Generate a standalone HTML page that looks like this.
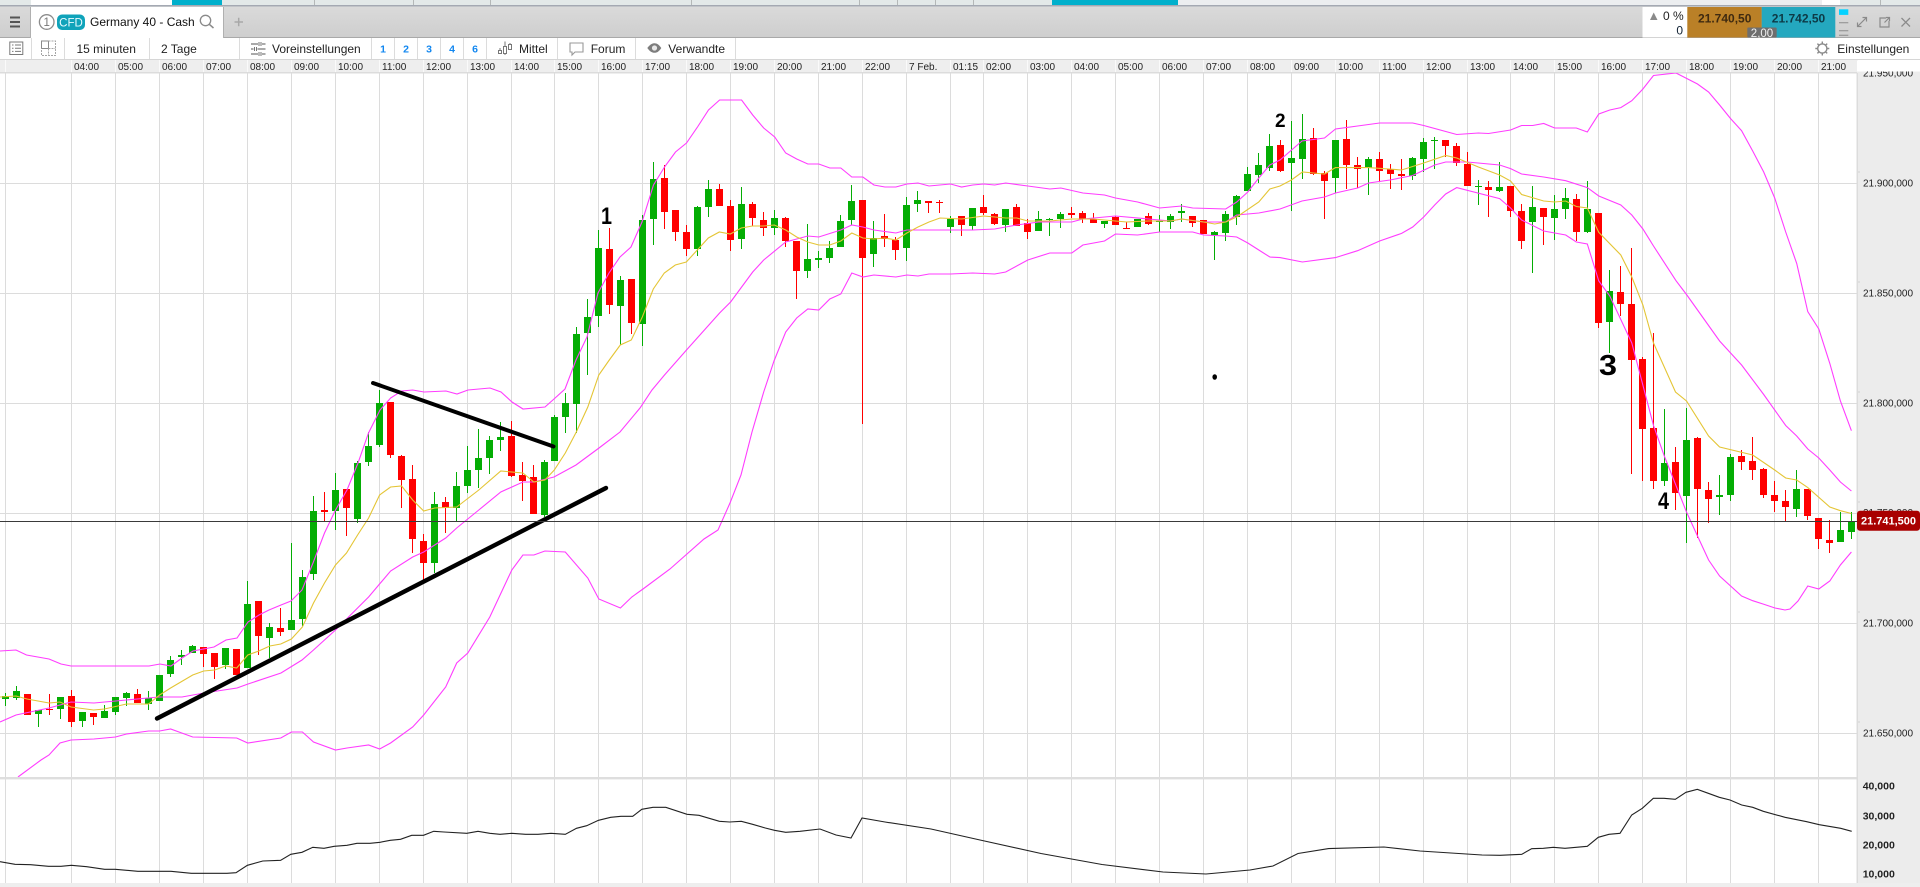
<!DOCTYPE html>
<html><head><meta charset="utf-8"><title>Germany 40 - Cash</title>
<style>
html,body{margin:0;padding:0;background:#fff;overflow:hidden;width:1920px;height:887px}
svg{display:block}
text{font-family:"Liberation Sans",sans-serif}
</style></head><body>
<svg xmlns="http://www.w3.org/2000/svg" width="1920" height="887" viewBox="0 0 1920 887">
<defs>
<linearGradient id="tb" x1="0" y1="0" x2="0" y2="1"><stop offset="0" stop-color="#dadada"/><stop offset="1" stop-color="#cecece"/></linearGradient>
<clipPath id="main"><rect x="0" y="73" width="1857" height="704"/></clipPath>
</defs>
<rect width="1920" height="887" fill="#fff"/>

<!-- top strip -->
<rect x="0" y="0" width="31" height="5" fill="#e3e9e9"/>
<rect x="172" y="0" width="50" height="5" fill="#00b0cc"/>
<rect x="222" y="0" width="830" height="5" fill="#e3e9e9"/>
<rect x="1052" y="0" width="126" height="5" fill="#00b0cc"/>
<rect x="1178" y="0" width="644" height="5" fill="#eceef0"/>
<rect x="1840" y="0" width="80" height="5" fill="#e3e9e9"/>
<path d="M314.5 0V5M413.5 0V5M490.5 0V5M691.5 0V5M859.5 0V5M897.5 0V5M935.5 0V5M973.5 0V5M1880.5 0V5" stroke="#b4b8b8" fill="none"/>
<rect x="0" y="5" width="1920" height="1.6" fill="#a4a9b3"/>

<!-- tab row -->
<rect x="0" y="6.6" width="1920" height="31" fill="url(#tb)"/>
<rect x="0" y="37" width="1920" height="1" fill="#a9a9a9"/>
<rect x="30" y="7" width="1" height="31" fill="#b0b0b0"/>
<path d="M10 17.5H20M10 22H20M10 26.5H20" stroke="#555" stroke-width="2" fill="none"/>
<rect x="31" y="7" width="192" height="32" fill="#fff"/>
<rect x="223" y="7" width="1" height="31" fill="#b0b0b0"/>
<circle cx="46.7" cy="22" r="7.3" fill="none" stroke="#8c8c8c" stroke-width="1.3"/>
<text x="46.7" y="26.2" font-size="11.5" fill="#777" text-anchor="middle">1</text>
<rect x="57" y="14.5" width="28" height="15.5" rx="5" fill="#0fa3ba"/>
<text x="71" y="26.3" font-size="11.5" fill="#e8fbff" text-anchor="middle">CFD</text>
<text x="90" y="26.2" font-size="12" fill="#111">Germany 40 - Cash</text>
<circle cx="205.5" cy="20.5" r="5.2" fill="none" stroke="#8a8a8a" stroke-width="1.3"/>
<path d="M209.3 24.3L213.5 28" stroke="#8a8a8a" stroke-width="1.5" fill="none"/>
<path d="M234.5 22H243M238.7 17.7V26.3" stroke="#a8a8a8" stroke-width="1.5" fill="none"/>

<!-- quote block -->
<rect x="1642.5" y="7" width="45" height="30.5" fill="#fff"/>
<path d="M1650 20L1653.7 12.5L1657.5 20Z" fill="#8a8a8a"/>
<text x="1663" y="20" font-size="12" fill="#222">0 %</text>
<text x="1683" y="34.5" font-size="12" fill="#123" text-anchor="end">0</text>
<rect x="1687.3" y="7" width="74.5" height="30.5" fill="#ba8027"/>
<rect x="1761.7" y="7" width="73.6" height="30.5" fill="#24a8bf"/>
<text x="1724.7" y="22.5" font-size="12" font-weight="bold" fill="#3f2a10" text-anchor="middle">21.740,50</text>
<text x="1798.5" y="22.5" font-size="12" font-weight="bold" fill="#0d3a46" text-anchor="middle">21.742,50</text>
<rect x="1747.3" y="27.5" width="29.4" height="10" fill="#6e6e6e" rx="1"/>
<text x="1762" y="37" font-size="11.5" fill="#f0f0f0" text-anchor="middle">2,00</text>
<rect x="1839" y="9.3" width="9.3" height="5.6" fill="#05d2ff"/>
<path d="M1839 22.7H1848.3M1839 30.7H1848.3M1839 35.3H1848.3" stroke="#8c8c8c" fill="none"/>
<path d="M1857.5 26.5L1866.5 17.5M1857.5 22.5V26.5H1861.5M1862.5 17.5H1866.5V21.5" stroke="#8a8a8a" stroke-width="1.2" fill="none"/>
<path d="M1886 18H1880V27H1889V21M1884.5 22.5L1889.5 17.5M1886 17.5H1889.5V21" stroke="#8a8a8a" stroke-width="1.2" fill="none"/>
<path d="M1901.5 18L1910 26.5M1910 18L1901.5 26.5" stroke="#8a8a8a" stroke-width="1.3" fill="none"/>

<!-- toolbar -->
<rect x="0" y="38" width="1920" height="22" fill="#fff"/>
<path d="M31.5 38V59M64.5 38V59M149.5 38V59M239.5 38V59M371.5 38V59M394.5 38V59M417.5 38V59M440.5 38V59M463.5 38V59M486.5 38V59M557.5 38V59M635.5 38V59M735.5 38V59" stroke="#dcdcdc" fill="none"/>
<rect x="9.8" y="42" width="13" height="12.5" fill="none" stroke="#7a7a7a"/>
<path d="M12 45H13.5M15 45H21M12 48.2H13.5M15 48.2H21M12 51.4H13.5M15 51.4H21" stroke="#7a7a7a" fill="none"/>
<path d="M41.5 48.5V41H48.5V48.5ZM41.5 48.5H48.5" stroke="#8a8a8a" fill="none"/>
<path d="M48.5 41H55.5V55.5H41.5V48.5M48.5 48.5H55.5M48.5 48.5V55.5" stroke="#a5a5a5" stroke-dasharray="2 1" fill="none"/>
<text x="76.5" y="53" font-size="12" fill="#222">15 minuten</text>
<text x="161" y="53" font-size="12" fill="#222">2 Tage</text>
<path d="M251 44H258M262 44H265.5M251 49H253.5M257.5 49H265.5M251 54H258M262 54H265.5" stroke="#777" stroke-width="1.3" fill="none"/>
<path d="M259 42V46M261 42V46M254.5 47V51M256.5 47V51M259 52V56M261 52V56" stroke="#777" fill="none"/>
<text x="272" y="53" font-size="12" fill="#222">Voreinstellungen</text>
<g font-size="10.5" font-weight="bold" fill="#1287f0" text-anchor="middle">
<text x="383" y="52.5">1</text><text x="406" y="52.5">2</text><text x="429" y="52.5">3</text><text x="452" y="52.5">4</text><text x="475" y="52.5">6</text></g>
<path d="M498.5 50.5h3v3h-3zM503.5 46.5h3v7h-3zM508.5 44.5h3v5h-3zM500 50.5V48M505 46.5V41.5M505 53.5V55M510 44.5V43" stroke="#777" fill="none"/>
<text x="519" y="53" font-size="12" fill="#222">Mittel</text>
<path d="M570 43H583V52H575L572 55V52H570Z" fill="none" stroke="#999" stroke-width="1.1"/>
<text x="590.7" y="53" font-size="12" fill="#222">Forum</text>
<path d="M647.3 48C650 44.2 652.5 43.2 654.5 43.2C657 43.2 659 44.5 661.3 48C659 51.5 657 52.8 654.5 52.8C652.5 52.8 650 51.8 647.3 48Z" fill="#7d7d7d"/>
<circle cx="654.5" cy="48" r="2.6" fill="#e8e8e8"/>
<text x="668.3" y="53" font-size="12" fill="#222">Verwandte</text>
<circle cx="1822.3" cy="48.5" r="4.6" fill="none" stroke="#8a8a8a" stroke-width="1.4"/>
<path d="M1822.3 41.5V43.5M1822.3 53.5V55.5M1815.3 48.5H1817.3M1827.3 48.5H1829.3M1817.4 43.6L1818.9 45.1M1825.7 51.9L1827.2 53.4M1817.4 53.4L1818.9 51.9M1825.7 45.1L1827.2 43.6" stroke="#8a8a8a" stroke-width="1.4" fill="none"/>
<text x="1837.3" y="53" font-size="12" fill="#222">Einstellungen</text>
<rect x="0" y="59" width="1920" height="1.2" fill="#d6d6d6"/>

<!-- time axis -->
<rect x="0" y="60" width="1857" height="12.5" fill="#eeeeee"/>
<rect x="0" y="72" width="1857" height="1.5" fill="#dcdcdc"/>
<path d="M5.5 60V72M71.5 60V72M115.5 60V72M159.5 60V72M203.5 60V72M247.5 60V72M291.5 60V72M335.5 60V72M379.5 60V72M423.5 60V72M467.5 60V72M511.5 60V72M554.5 60V72M598.5 60V72M642.5 60V72M686.5 60V72M730.5 60V72M774.5 60V72M818.5 60V72M862.5 60V72M906.5 60V72M950.5 60V72M983.5 60V72M1027.5 60V72M1071.5 60V72M1115.5 60V72M1159.5 60V72M1203.5 60V72M1247.5 60V72M1291.5 60V72M1335.5 60V72M1379.5 60V72M1423.5 60V72M1467.5 60V72M1510.5 60V72M1554.5 60V72M1598.5 60V72M1642.5 60V72M1686.5 60V72M1730.5 60V72M1774.5 60V72M1818.5 60V72" stroke="#fafafa" fill="none"/>
<g font-size="10" fill="#222">
<text x="74" y="70">04:00</text><text x="118" y="70">05:00</text><text x="162" y="70">06:00</text><text x="206" y="70">07:00</text><text x="250" y="70">08:00</text><text x="294" y="70">09:00</text><text x="338" y="70">10:00</text><text x="382" y="70">11:00</text><text x="426" y="70">12:00</text><text x="470" y="70">13:00</text><text x="514" y="70">14:00</text><text x="557" y="70">15:00</text><text x="601" y="70">16:00</text><text x="645" y="70">17:00</text><text x="689" y="70">18:00</text><text x="733" y="70">19:00</text><text x="777" y="70">20:00</text><text x="821" y="70">21:00</text><text x="865" y="70">22:00</text><text x="909" y="70">7 Feb.</text><text x="953" y="70">01:15</text><text x="986" y="70">02:00</text><text x="1030" y="70">03:00</text><text x="1074" y="70">04:00</text><text x="1118" y="70">05:00</text><text x="1162" y="70">06:00</text><text x="1206" y="70">07:00</text><text x="1250" y="70">08:00</text><text x="1294" y="70">09:00</text><text x="1338" y="70">10:00</text><text x="1382" y="70">11:00</text><text x="1426" y="70">12:00</text><text x="1470" y="70">13:00</text><text x="1513" y="70">14:00</text><text x="1557" y="70">15:00</text><text x="1601" y="70">16:00</text><text x="1645" y="70">17:00</text><text x="1689" y="70">18:00</text><text x="1733" y="70">19:00</text><text x="1777" y="70">20:00</text><text x="1821" y="70">21:00</text>
</g>

<!-- right axis -->
<rect x="1857" y="71.5" width="63" height="815.5" fill="#ececec"/>
<rect x="1856.5" y="73" width="1.5" height="810" fill="#dcdcdc"/>
<path d="M1858 172H1860M1858 282H1860M1858 392H1860M1858 502H1860M1858 612H1860M1858 722H1860" stroke="#d2d2d2" fill="none"/>
<g font-size="10" fill="#222">
<text x="1863" y="76.5">21.950,000</text><text x="1863" y="186.5">21.900,000</text><text x="1863" y="296.5">21.850,000</text><text x="1863" y="406.5">21.800,000</text><text x="1863" y="516">21.750,000</text><text x="1863" y="626.5">21.700,000</text><text x="1863" y="736.5">21.650,000</text>
</g>
<rect x="1858" y="60" width="62" height="11.5" fill="#fff"/>

<!-- main grid -->
<g fill="none" stroke="#dcdcdc" shape-rendering="crispEdges">
<path d="M0 183.5H1857M0 293.5H1857M0 403.5H1857M0 513.5H1857M0 623.5H1857M0 733.5H1857"/>
<path d="M5.5 73V883M71.5 73V883M115.5 73V883M159.5 73V883M203.5 73V883M247.5 73V883M291.5 73V883M335.5 73V883M379.5 73V883M423.5 73V883M467.5 73V883M511.5 73V883M554.5 73V883M598.5 73V883M642.5 73V883M686.5 73V883M730.5 73V883M774.5 73V883M818.5 73V883M862.5 73V883M906.5 73V883M950.5 73V883M983.5 73V883M1027.5 73V883M1071.5 73V883M1115.5 73V883M1159.5 73V883M1203.5 73V883M1247.5 73V883M1291.5 73V883M1335.5 73V883M1379.5 73V883M1423.5 73V883M1467.5 73V883M1510.5 73V883M1554.5 73V883M1598.5 73V883M1642.5 73V883M1686.5 73V883M1730.5 73V883M1774.5 73V883M1818.5 73V883"/>
</g>

<g clip-path="url(#main)">
<!-- candles -->
<g fill="none" shape-rendering="crispEdges">
<path stroke="#04ad04" d="M5.5 693V706M16.5 686V700M38.5 710V727M60.5 697V719M82.5 712V727M104.5 705V718M115.5 697V715M126.5 692V706M148.5 691V710M170.5 656V677M181.5 650V665M192.5 645V653M225.5 648V669M247.5 581V668M269.5 623V658M291.5 543V630M302.5 570V626M313.5 496V580M335.5 473V530M357.5 461V523M368.5 432V466M379.5 390V447M434.5 492V573M456.5 472V522M467.5 446V493M478.5 429V488M489.5 436V474M500.5 422V451M544.5 460V517M554.5 415V461M565.5 393V433M576.5 327V433M587.5 299V375M598.5 230V327M620.5 276V345M642.5 215V346M653.5 162V245M697.5 206V256M708.5 180V217M741.5 187V249M774.5 210V235M807.5 224V278M818.5 251V268M829.5 241V263M840.5 215V247M851.5 185V225M873.5 221V267M906.5 197V261M917.5 191V212M950.5 216V233M972.5 208V230M1005.5 209V232M1038.5 211V231M1049.5 218V236M1060.5 212V228M1104.5 221V228M1137.5 219V227M1159.5 215V232M1170.5 214V229M1181.5 204V222M1214.5 231V260M1225.5 211V241M1236.5 195V225M1247.5 167V191M1258.5 153V183M1269.5 134V171M1291.5 121V211M1302.5 114V179M1335.5 140V193M1368.5 157V195M1412.5 157V180M1423.5 138V172M1434.5 137V169M1478.5 180V205M1499.5 162V192M1532.5 186V273M1554.5 195V240M1565.5 188V219M1587.5 181V233M1609.5 270V353M1664.5 409V486M1686.5 408V543M1719.5 475V515M1730.5 454V501M1796.5 470V517M1840.5 512V542M1851.5 512V539"/>
<path stroke="#04ad04" stroke-width="7" d="M5.5 696V699M16.5 691V698M38.5 710V714M60.5 697V709M82.5 712V721M104.5 711V718M115.5 697V712M126.5 693V698M148.5 698V704M159.5 675V701M170.5 660V674M181.5 655V657M192.5 646V653M225.5 648V665M247.5 604V668M269.5 627V638M291.5 620V630M302.5 577V619M313.5 511V574M335.5 490V511M357.5 463V519M368.5 446V462M379.5 403V445M434.5 504V563M456.5 486V508M467.5 470V486M478.5 458V470M489.5 440V458M500.5 437V440M544.5 462V515M554.5 417V461M565.5 403V417M576.5 334V404M587.5 317V333M598.5 248V316M620.5 280V306M642.5 220V324M653.5 179V219M697.5 207V249M708.5 189V207M741.5 204V239M774.5 218V228M807.5 259V271M818.5 258V260M829.5 248V258M840.5 221V247M851.5 201V220M873.5 238V254M906.5 205V248M917.5 200V204M950.5 219V227M972.5 208V226M1005.5 209V225M1038.5 219V231M1049.5 219V220M1060.5 214V219M1104.5 221V224M1137.5 219V227M1159.5 221V222M1170.5 216V222M1181.5 211V213M1214.5 232V235M1225.5 214V233M1236.5 196V217M1247.5 174V191M1258.5 165V175M1269.5 146V168M1291.5 158V163M1302.5 139V159M1335.5 140V178M1368.5 159V168M1412.5 158V176M1423.5 142V159M1434.5 140V141M1478.5 186V187M1499.5 187V191M1532.5 207V222M1554.5 209V218M1565.5 198V209M1587.5 209V232M1609.5 291V322M1664.5 463V481M1686.5 440V496M1719.5 495V497M1730.5 457V495M1796.5 489V509M1840.5 530V542M1851.5 522V532"/>
<path stroke="#ff0000" d="M27.5 694V715M49.5 694V715M71.5 690V727M93.5 713V725M137.5 689V703M203.5 647V667M214.5 653V679M236.5 649V675M258.5 601V655M280.5 608V636M324.5 492V521M346.5 489V536M390.5 402V458M401.5 455V508M412.5 465V553M423.5 534V580M445.5 497V533M511.5 421V477M522.5 462V501M533.5 465V514M609.5 228V314M631.5 279V334M664.5 165V229M675.5 210V241M686.5 225V256M719.5 184V206M730.5 200V251M752.5 202V226M763.5 212V236M785.5 217V247M796.5 241V299M862.5 200V424M884.5 214V247M895.5 237V260M928.5 201V213M939.5 200V213M961.5 216V236M983.5 195V215M994.5 213V225M1016.5 204V226M1027.5 219V239M1071.5 207V218M1082.5 211V223M1093.5 213V223M1115.5 216V225M1126.5 222V229M1148.5 213V225M1192.5 216V227M1203.5 220V234M1280.5 140V172M1313.5 128V175M1324.5 171V219M1346.5 120V189M1357.5 157V188M1379.5 152V182M1390.5 164V189M1401.5 159V190M1445.5 140V157M1456.5 143V166M1467.5 152V186M1488.5 181V217M1510.5 186V217M1521.5 204V249M1543.5 208V245M1576.5 194V241M1598.5 213V328M1620.5 266V316M1631.5 248V474M1642.5 357V481M1653.5 333V489M1675.5 447V510M1697.5 437V538M1708.5 482V523M1741.5 450V470M1752.5 437V480M1763.5 468V498M1774.5 481V512M1785.5 490V522M1807.5 489V520M1818.5 518V549M1829.5 520V553"/>
<path stroke="#ff0000" stroke-width="7" d="M27.5 694V715M49.5 709V710M71.5 696V722M93.5 713V717M137.5 694V703M203.5 647V654M214.5 653V667M236.5 649V675M258.5 601V636M280.5 628V632M324.5 510V512M346.5 489V508M390.5 402V455M401.5 456V480M412.5 479V539M423.5 541V563M445.5 502V508M511.5 436V476M522.5 475V481M533.5 477V514M609.5 249V305M631.5 279V323M664.5 178V212M675.5 210V232M686.5 232V249M719.5 189V206M730.5 206V240M752.5 204V218M763.5 220V228M785.5 218V241M796.5 241V271M862.5 200V258M884.5 236V239M895.5 240V250M928.5 201V203M939.5 202V203M961.5 216V225M983.5 207V213M994.5 214V224M1016.5 207V226M1027.5 223V232M1071.5 213V215M1082.5 213V219M1093.5 219V223M1115.5 217V225M1126.5 228V229M1148.5 216V224M1192.5 216V223M1203.5 220V234M1280.5 145V171M1313.5 138V174M1324.5 173V181M1346.5 139V165M1357.5 165V169M1379.5 159V171M1390.5 169V174M1401.5 174V176M1445.5 140V146M1456.5 146V163M1467.5 164V186M1488.5 187V190M1510.5 186V211M1521.5 211V241M1543.5 208V217M1576.5 199V232M1598.5 213V323M1620.5 292V304M1631.5 304V360M1642.5 359V429M1653.5 428V481M1675.5 462V493M1697.5 438V489M1708.5 490V499M1741.5 456V462M1752.5 461V470M1763.5 469V495M1774.5 495V501M1785.5 501V507M1807.5 489V516M1818.5 518V539M1829.5 540V543"/>
</g>

<!-- upper band -->
<polyline fill="none" stroke="#ff3cff" stroke-width="1.1" points="0,651 16,650 26.5,655 49,659 61,664 71,666 149,666 160,664 171,666 182,658 193,651 214,647 226,640 237,638 248,622 259,615 269,610 281,605 291,601 302,590 313,563 324.5,533 335.5,510 347,490 358,463 368.5,433 380,410 390.6,398 401.6,391 412.7,390 424,392 446,391 457,394 468,390 490,388 501,392 512,402 523,409 545,407 554,399 565,389 576,360 587,337 598,293 609,273 620,257 631,247 642,222 653.5,185 664.5,167 675.5,152 686.5,143 697.5,127 708.5,110 719.6,100 741.6,100 752.7,115 763.7,128 774.7,137 785.7,153 796.7,159 807.8,164 818.8,164 829.8,168 840.8,168 851.8,177 862.9,177 873.9,185 884.9,187 895.9,187 906.9,184 918,183 929,186 950.6,184 961.6,187 972.7,185 983.7,184 994.7,185 1005.7,183 1027.8,186 1049.8,189 1060.8,188 1082.9,193 1104.5,195 1115.5,198 1137.6,202 1159.6,208 1181.6,206 1192.7,208 1225.7,209 1236.7,202 1247.8,192 1258.8,178 1269.8,165 1280,160 1302,141 1324.5,138 1335.5,129 1357.6,126 1379.6,123 1412.7,123 1423.7,125.5 1456.7,134.5 1478.4,133 1488.6,133.5 1510.6,130 1521.6,125.5 1532.7,125.5 1543.7,123.5 1554.7,128 1576.3,128 1587.3,132 1598.8,114 1609.8,110 1620.8,107.6 1631.8,100.7 1642.9,89 1653.5,75.5 1676,73 1697.5,84 1708.6,92 1719.6,105 1730.6,118.6 1741.6,130.7 1752.7,151 1763.7,172 1774.7,198 1785.7,232 1796.7,263.4 1807.8,311.7 1818.8,329 1829.8,363.4 1840.4,401 1851.4,430.7"/>
<!-- mid band -->
<polyline fill="none" stroke="#ff3cff" stroke-width="1.1" points="0,722 16,715 49,708 71,702 94,703 126.5,700 159,697 182,697 204,693 237,688 248,684 281,673 302,660 313.5,650 335.5,630 368.6,597 390.6,571 412.7,557 423.7,552 445.7,538 456.7,528 478.8,510 500.8,492 522.9,482 534,482 554,477 576,465 599,448 620,432 640,408 652,390 664.5,375 686.5,350 719.6,313 730.6,302 752.7,272 763.7,260 785.7,242 796.7,239 807.8,236 818.8,237 840.8,230 851.8,225 862.9,227 873.9,230 895.9,233 906.9,230 950.6,230 972.7,230 994.7,229 1016.7,225 1038.8,222 1071.8,222 1082.9,219 1115.5,216 1148.6,219 1170.6,221 1181.6,219 1203.7,222 1225.7,222 1236.7,215 1258.8,213 1280,209 1302,201 1324.5,197 1335.5,193 1357.6,188 1368.6,183 1390,180 1412.7,175.5 1434.7,165 1445.7,162 1467.3,162 1499.6,165 1510.6,168.6 1521.6,174 1543.7,177 1565.7,180.7 1587.3,187.6 1598.8,196 1620.8,205 1631.8,215 1642.9,229 1653.5,246 1676,280.7 1686.5,294.5 1719.6,341 1741.6,365 1763.7,394.5 1785.7,425.5 1796.7,436 1807.8,449 1818.8,458 1829.8,470 1840.4,482 1851.4,491"/>
<!-- lower band -->
<polyline fill="none" stroke="#ff3cff" stroke-width="1.1" points="18,777 41,760 49,755 60,743 71,740 94,739 115.5,737 126.5,734 148.6,731 159.6,731 170.6,729 192.7,737 236.7,738 247.8,743 280.8,738 291.4,732 302.4,732 313.5,742 335.5,750 347,748 368.6,745 379.6,749 390.6,743 412.7,727 423.7,715 445.7,687 456.7,663 467.8,653 489.8,617 511.8,570 522.9,555 533.9,555 544.9,551 565.3,552 587.8,578 598.8,599 620.4,608 631.8,597 643,589 670,569 704,539 718,530 730,503 741,475 752,432 763.7,392 774,361 785.7,332 796.7,318 807.8,309 818.8,310 829.8,299 840.8,294 851.8,273 862.9,277 873.9,275 895.9,277 906.9,275 918,276 929,274 950.6,274 972.7,273 994.7,274 1005.7,272 1027.8,260 1049.8,253 1071.8,253 1082.9,245 1104.5,241 1115.5,234 1137.6,235 1159.6,232 1192.7,232 1203.7,235 1225.7,236 1236.7,237 1247.8,243 1258.8,250 1269.8,257 1280,257.6 1302.4,262 1335.5,257.6 1357.6,250.7 1379.6,241 1401.6,233.4 1412.7,227 1423.7,217 1434.7,205 1445.7,194 1456.7,187.6 1499.6,198.6 1510.6,208 1521.6,220 1543.7,231 1565.7,235 1576.3,242 1587.3,244 1598.8,281 1609.8,296 1631.8,343 1653.5,425.5 1664.5,456.5 1686.5,512 1697.5,536 1708.6,560 1719.6,576 1741.6,596 1752.7,600.7 1763,604 1775,608 1785,610 1790,609 1798,601 1807.8,586 1818.8,589 1829.8,581 1840.4,565 1851.4,552"/>
<!-- gold MA -->
<polyline fill="none" stroke="#e4c535" stroke-width="1.1" points="0,697 16,696 27,699 49,703 60,702 71,707 93.5,710 104.5,709 126.5,704 148.6,704 159.6,695 170.6,688 192.7,675 203.7,671 214.7,670 225.7,666 236.7,668 247.8,655 258.8,651 269.8,646 280.8,644 291.4,639 302.4,627 313.5,603 324.5,583 335.5,565 346.5,553 357.6,535 368.6,518 379.6,495 390.6,487 401.6,486 412.7,500 423.7,511 434.7,508 456.7,507 478.8,490 500.8,471 522.9,473 533.9,482 544.9,480 554.3,470 565.3,453 576.3,432 587.8,407 598.8,375 609.3,360 620.3,345 631.3,340 642.3,317 653.3,289 664.3,273 675.3,265 686.3,262 697.3,250 708.3,238 719.3,232 730.3,234 741.3,228 752.3,226 763.3,226 774.3,225 785.7,230 796.7,237 807.8,242 818.8,245 829.8,245 840.8,241 851.8,233 862.9,238 873.9,239 884.9,238 895.9,240 906.9,233 918,227 929,222 940,218 961.6,219 983.7,216 1005.7,218 1016.7,218 1027.8,221 1049.8,221 1071.8,219 1093.5,219 1115.5,221 1126.5,222 1148.6,221 1170.6,221 1181.6,219 1203.7,222 1214.7,224 1225.7,222 1236.7,217 1258.8,202 1269.8,189 1280,186 1291.4,180 1302.4,172 1313.5,173 1324.5,174 1335.5,167.6 1368.6,167.6 1401.6,170 1423.7,163 1445.7,155.5 1456.7,158 1478.4,167 1499.6,175 1510.6,181 1521.6,194.5 1543.7,201 1554.7,202 1565.7,201 1576.3,206.5 1587.3,208 1598.8,232.4 1620.8,255 1631.8,277 1642.9,305 1653.5,343 1675.5,392 1686.5,401 1708.6,436 1719.6,447 1752.7,455 1774.7,470 1785.7,478 1796.7,480 1807.8,487.6 1829.8,507 1840.4,510.7 1851.4,513.5"/>

<!-- drawn trend lines -->
<path d="M157 718.5L606 488" stroke="#000" stroke-width="4.4" stroke-linecap="round" fill="none"/>
<path d="M373 383L553.5 446.5" stroke="#000" stroke-width="4" stroke-linecap="round" fill="none"/>
<!-- hand-written marks -->
<g fill="#000" font-weight="bold">
<text x="601" y="224" font-size="24" textLength="11" lengthAdjust="spacingAndGlyphs">1</text>
<text x="1275" y="127" font-size="19">2</text>
<text x="1599" y="375" font-size="29" textLength="18" lengthAdjust="spacingAndGlyphs">3</text>
<text x="1658" y="509" font-size="24" textLength="11" lengthAdjust="spacingAndGlyphs">4</text>
</g>
<ellipse cx="1214.7" cy="377" rx="2.3" ry="2.8" fill="#000"/>
<!-- current price line -->
<rect x="0" y="521" width="1857" height="1" fill="#3a3a3a"/>
</g>

<!-- current price badge -->
<rect x="1857" y="510.7" width="63" height="20" rx="3" fill="#a90000"/>
<text x="1888.5" y="524.7" font-size="11" font-weight="bold" fill="#fff" text-anchor="middle">21.741,500</text>

<!-- volume panel -->
<rect x="0" y="777" width="1920" height="2.4" fill="#dedede"/>
<rect x="1857" y="777" width="63" height="110" fill="#ececec"/>
<rect x="1856.5" y="777" width="1.5" height="106" fill="#dcdcdc"/>
<polyline fill="none" stroke="#222" stroke-width="1.1" points="0,861.7 15,864.3 30.6,864.7 48.5,866.3 61,866.3 71.4,865.3 86.7,866.7 104.6,869.3 115.3,869.3 137.8,871.3 171,871.3 191.3,873.3 227,873.3 236,872.7 247.4,865.3 262.8,861 280.6,860.3 290.8,854.3 302,852.3 312.8,847.3 324,848.3 334.2,846.3 347,845.3 357,843.3 370,843.3 380,842.3 390.3,840.3 400.5,839.3 411.7,835.3 423.5,835.3 433.7,831.3 444,832 466.8,833.3 478,831.3 489.8,833.3 500,834.3 511.7,833.3 525.5,834.3 538,834.3 551,833.3 565.3,834.3 576.5,828.3 586.7,825.7 598.5,820.3 610.7,817.3 621,816.3 632.7,816.3 641.8,809.3 653,807.3 665.8,807.3 687,814.3 699,815.3 719.4,821.3 729.6,822 741.3,821.3 752.6,824.3 765.3,828 774.5,830.3 785.7,832.3 800,831.3 820,829 836,835 851,838 862,818 885,822 931,829 980,840 1041,853.5 1102,864.5 1163,872 1206,874 1250,870 1273,866 1298,853.5 1328.6,848.6 1384,847 1420,851 1482,855 1500,855.3 1521.7,854.3 1531.7,848.7 1543.3,848.3 1553.3,847.3 1565,848.3 1587.3,846.3 1598.3,837.3 1609,834.3 1620,833.3 1631.7,815 1642.3,808.3 1653.3,798.3 1664,798.3 1675.3,799.3 1686,792.3 1697.3,789.3 1708.3,793.3 1719.3,797.3 1730,800 1741.7,805 1752.7,807.3 1763.3,811.3 1785,817.3 1806.7,821.7 1819.3,824.7 1840.7,828.3 1851.7,831.3"/>
<g font-size="10.5" font-weight="bold" fill="#222">
<text x="1862.7" y="789.5">40,000</text><text x="1862.7" y="819.5">30,000</text><text x="1862.7" y="848.5">20,000</text><text x="1862.7" y="877.5">10,000</text>
</g>
<rect x="0" y="883" width="1920" height="4" fill="#eeeeee"/>
</svg>
</body></html>
